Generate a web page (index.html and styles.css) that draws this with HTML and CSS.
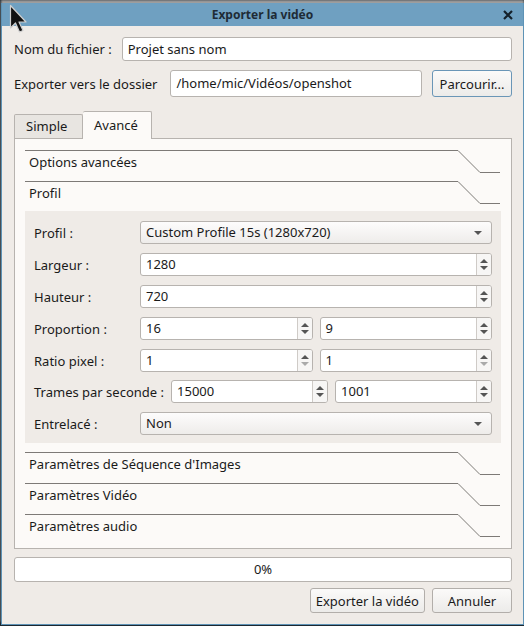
FILE: index.html
```html
<!DOCTYPE html>
<html lang="fr">
<head>
    <meta charset="UTF-8">
    <title>Exporter la vidéo</title>
    <link rel="stylesheet" href="styles.css">
</head>
<body>
    <div class="window">
        <div class="titlebar">
            <span class="title">Exporter la vidéo</span>
            <svg class="close" width="10" height="10" viewBox="0 0 10 10"><path d="M1 1 L9 9 M9 1 L1 9" stroke="#14202a" stroke-width="2.2"/></svg>
        </div>

        <div class="content">
            <div class="row">
                <label class="lbl">Nom du fichier :</label>
                <div class="input grow">Projet sans nom</div>
            </div>
            <div class="row row-folder">
                <label class="lbl">Exporter vers le dossier</label>
                <div class="input grow">/home/mic/Vidéos/openshot</div>
                <button class="btn btn-focus">Parcourir...</button>
            </div>

            <div class="tabs">
                <div class="tab">Simple</div>
                <div class="tab active">Avancé</div>
            </div>

            <div class="pane">
                <div class="section">
                    <svg class="section-line" width="475" height="23" viewBox="0 0 475 23"><path d="M0 0.5 H433 L455 22.5 H475" fill="none" stroke="#7d7a77" stroke-width="1"/></svg>
                    <span>Options avancées</span>
                </div>
                <div class="section">
                    <svg class="section-line" width="475" height="23" viewBox="0 0 475 23"><path d="M0 0.5 H433 L455 22.5 H475" fill="none" stroke="#7d7a77" stroke-width="1"/></svg>
                    <span>Profil</span>
                </div>

                <div class="profile">
                    <div class="prow">
                        <label class="plbl">Profil :</label>
                        <div class="combo grow">Custom Profile 15s (1280x720)<span class="arrow"></span></div>
                    </div>
                    <div class="prow">
                        <label class="plbl">Largeur :</label>
                        <div class="spin grow"><span class="val">1280</span><span class="spin-btns"><i class="up"></i><i class="down"></i></span></div>
                    </div>
                    <div class="prow">
                        <label class="plbl">Hauteur :</label>
                        <div class="spin grow"><span class="val">720</span><span class="spin-btns"><i class="up"></i><i class="down"></i></span></div>
                    </div>
                    <div class="prow">
                        <label class="plbl">Proportion :</label>
                        <div class="spin grow"><span class="val">16</span><span class="spin-btns"><i class="up"></i><i class="down"></i></span></div>
                        <div class="spin grow"><span class="val">9</span><span class="spin-btns"><i class="up"></i><i class="down"></i></span></div>
                    </div>
                    <div class="prow">
                        <label class="plbl">Ratio pixel :</label>
                        <div class="spin grow"><span class="val">1</span><span class="spin-btns"><i class="up"></i><i class="down off"></i></span></div>
                        <div class="spin grow"><span class="val">1</span><span class="spin-btns"><i class="up"></i><i class="down off"></i></span></div>
                    </div>
                    <div class="prow tight">
                        <label class="plbl auto">Trames par seconde :</label>
                        <div class="spin grow"><span class="val">15000</span><span class="spin-btns"><i class="up"></i><i class="down"></i></span></div>
                        <div class="spin grow"><span class="val">1001</span><span class="spin-btns"><i class="up"></i><i class="down"></i></span></div>
                    </div>
                    <div class="prow">
                        <label class="plbl">Entrelacé :</label>
                        <div class="combo grow">Non<span class="arrow"></span></div>
                    </div>
                </div>

                <div class="section first-after">
                    <svg class="section-line" width="475" height="23" viewBox="0 0 475 23"><path d="M0 0.5 H433 L455 22.5 H475" fill="none" stroke="#7d7a77" stroke-width="1"/></svg>
                    <span>Paramètres de Séquence d'Images</span>
                </div>
                <div class="section">
                    <svg class="section-line" width="475" height="23" viewBox="0 0 475 23"><path d="M0 0.5 H433 L455 22.5 H475" fill="none" stroke="#7d7a77" stroke-width="1"/></svg>
                    <span>Paramètres Vidéo</span>
                </div>
                <div class="section">
                    <svg class="section-line" width="475" height="23" viewBox="0 0 475 23"><path d="M0 0.5 H433 L455 22.5 H475" fill="none" stroke="#7d7a77" stroke-width="1"/></svg>
                    <span>Paramètres audio</span>
                </div>
            </div>

            <div class="progress">0%</div>

            <div class="actions">
                <button class="btn">Exporter la vidéo</button>
                <button class="btn btn-cancel">Annuler</button>
            </div>
        </div>
    </div>

    <!-- mouse pointer left on the title bar -->
    <svg class="pointer" width="20" height="30" viewBox="0 0 20 30">
        <path d="M1.5 1.5 V24 L6.5 19 L10.5 28 L14 26.5 L10 18 H17 Z" fill="#111" stroke="#cfcfcf" stroke-width="1.2" stroke-linejoin="round"/>
    </svg>
</body>
</html>
```

FILE: styles.css
```css
body {
    margin: 0;
    background-color: #1d2831;
    font-family: "Noto Sans", "Open Sans", sans-serif;
    font-size: 13px;
    color: #1a1a1a;
}
.window {
    width: 521px;
    height: 621px;
    margin-top: 3px;
    margin-left: 1px;
    background-color: #efebe7;
    border: 1px solid #5e93b6;
    border-top: none;
    box-shadow: 0 -3px 2px #9e9e9e;
    position: relative;
}
.titlebar {
    height: 23px;
    background-color: #6fa0c1;
    display: flex;
    align-items: center;
    justify-content: center;
    position: relative;
}
.title {
    font-weight: bold;
    font-size: 12px;
    color: #1e2b36;
}
.close {
    position: absolute;
    right: 10px;
    top: 7px;
}
.content {
    padding: 11px 11px 0 12px;
}
.row {
    display: flex;
    align-items: center;
    gap: 10px;
    height: 24px;
}
.row-folder {
    margin-top: 9px;
    height: 27px;
    gap: 13px;
}
.row-folder .btn {
    margin-left: -3px;
}
.lbl {
    white-space: nowrap;
}
.grow {
    flex: 1;
    min-width: 0;
}
.input {
    height: 22px;
    line-height: 22px;
    background-color: #fff;
    border: 1px solid #b7b3af;
    border-radius: 3px;
    padding-left: 5px;
    white-space: nowrap;
    overflow: hidden;
}
.row-folder .input {
    height: 25px;
    line-height: 25px;
}
.btn {
    font-family: inherit;
    font-size: 13px;
    color: #1a1a1a;
    height: 25px;
    padding: 0 5px;
    background: linear-gradient(#fbfaf9, #ecebe9);
    border: 1px solid #b2aeaa;
    border-radius: 3px;
}
.btn-focus {
    border-color: #6a96b7;
    height: 27px;
    width: 80px;
}
.tabs {
    display: flex;
    margin-top: 14px;
    align-items: flex-end;
    height: 27px;
}
.tab {
    height: 23px;
    line-height: 23px;
    padding: 0 11px;
    width: 45px;
    background-color: #e8e5e1;
    border: 1px solid #b7b3af;
    border-bottom: none;
    border-radius: 2px 2px 0 0;
}
.tab.active {
    height: 27px;
    line-height: 26px;
    width: 46px;
    background-color: #fcfaf8;
    border-left: none;
    position: relative;
    top: 1px;
}
.pane {
    background-color: #fcfaf8;
    border: 1px solid #b7b3af;
    padding: 11px 10px 11px 10px;
    height: 387px;
}
.section {
    position: relative;
    height: 31px;
    padding-left: 4px;
    line-height: 23px;
}
.section span {
    position: relative;
    top: 1px;
}
.section-line {
    position: absolute;
    left: 0;
    top: 0;
}
.section.first-after {
    margin-top: 9px;
}
.profile {
    margin-top: -1px;
    background-color: #efebe7;
    padding: 10px 9px 8px 9px;
    display: flex;
    flex-direction: column;
    gap: 9px;
}
.prow {
    display: flex;
    align-items: center;
    gap: 7px;
    height: 23px;
}
.prow.tight {
    margin-top: -1px;
}
.plbl {
    width: 99px;
    white-space: nowrap;
}
.plbl.auto {
    width: auto;
}
.combo {
    height: 21px;
    line-height: 21px;
    padding-left: 5px;
    border: 1px solid #b7b3af;
    border-radius: 3px;
    background: linear-gradient(#fdfcfc, #eeecea);
    position: relative;
}
.arrow {
    position: absolute;
    right: 9px;
    top: 9px;
    border-left: 4px solid transparent;
    border-right: 4px solid transparent;
    border-top: 4px solid #555;
}
.spin {
    height: 21px;
    line-height: 21px;
    border: 1px solid #b7b3af;
    border-radius: 3px;
    background-color: #fff;
    display: flex;
    overflow: hidden;
}
.val {
    flex: 1;
    padding-left: 5px;
}
.spin-btns {
    width: 14px;
    border-left: 1px solid #cfcbc7;
    display: flex;
    flex-direction: column;
    align-items: center;
    justify-content: center;
    gap: 3px;
    background-color: #f7f6f5;
}
.spin-btns i {
    width: 0;
    height: 0;
    border-left: 4px solid transparent;
    border-right: 4px solid transparent;
}
.spin-btns .up {
    border-bottom: 4px solid #555;
}
.spin-btns .down {
    border-top: 4px solid #555;
}
.spin-btns .down.off {
    border-top-color: #aaa;
}
.progress {
    margin-top: 8px;
    height: 23px;
    line-height: 23px;
    text-align: center;
    background-color: #fff;
    border: 1px solid #b7b3af;
    border-radius: 3px;
}
.actions {
    display: flex;
    justify-content: flex-end;
    gap: 7px;
    margin-top: 6px;
}
.actions .btn {
    height: 25px;
}
.btn-cancel {
    width: 80px;
}
.pointer {
    position: absolute;
    left: 9px;
    top: 4px;
}
```
